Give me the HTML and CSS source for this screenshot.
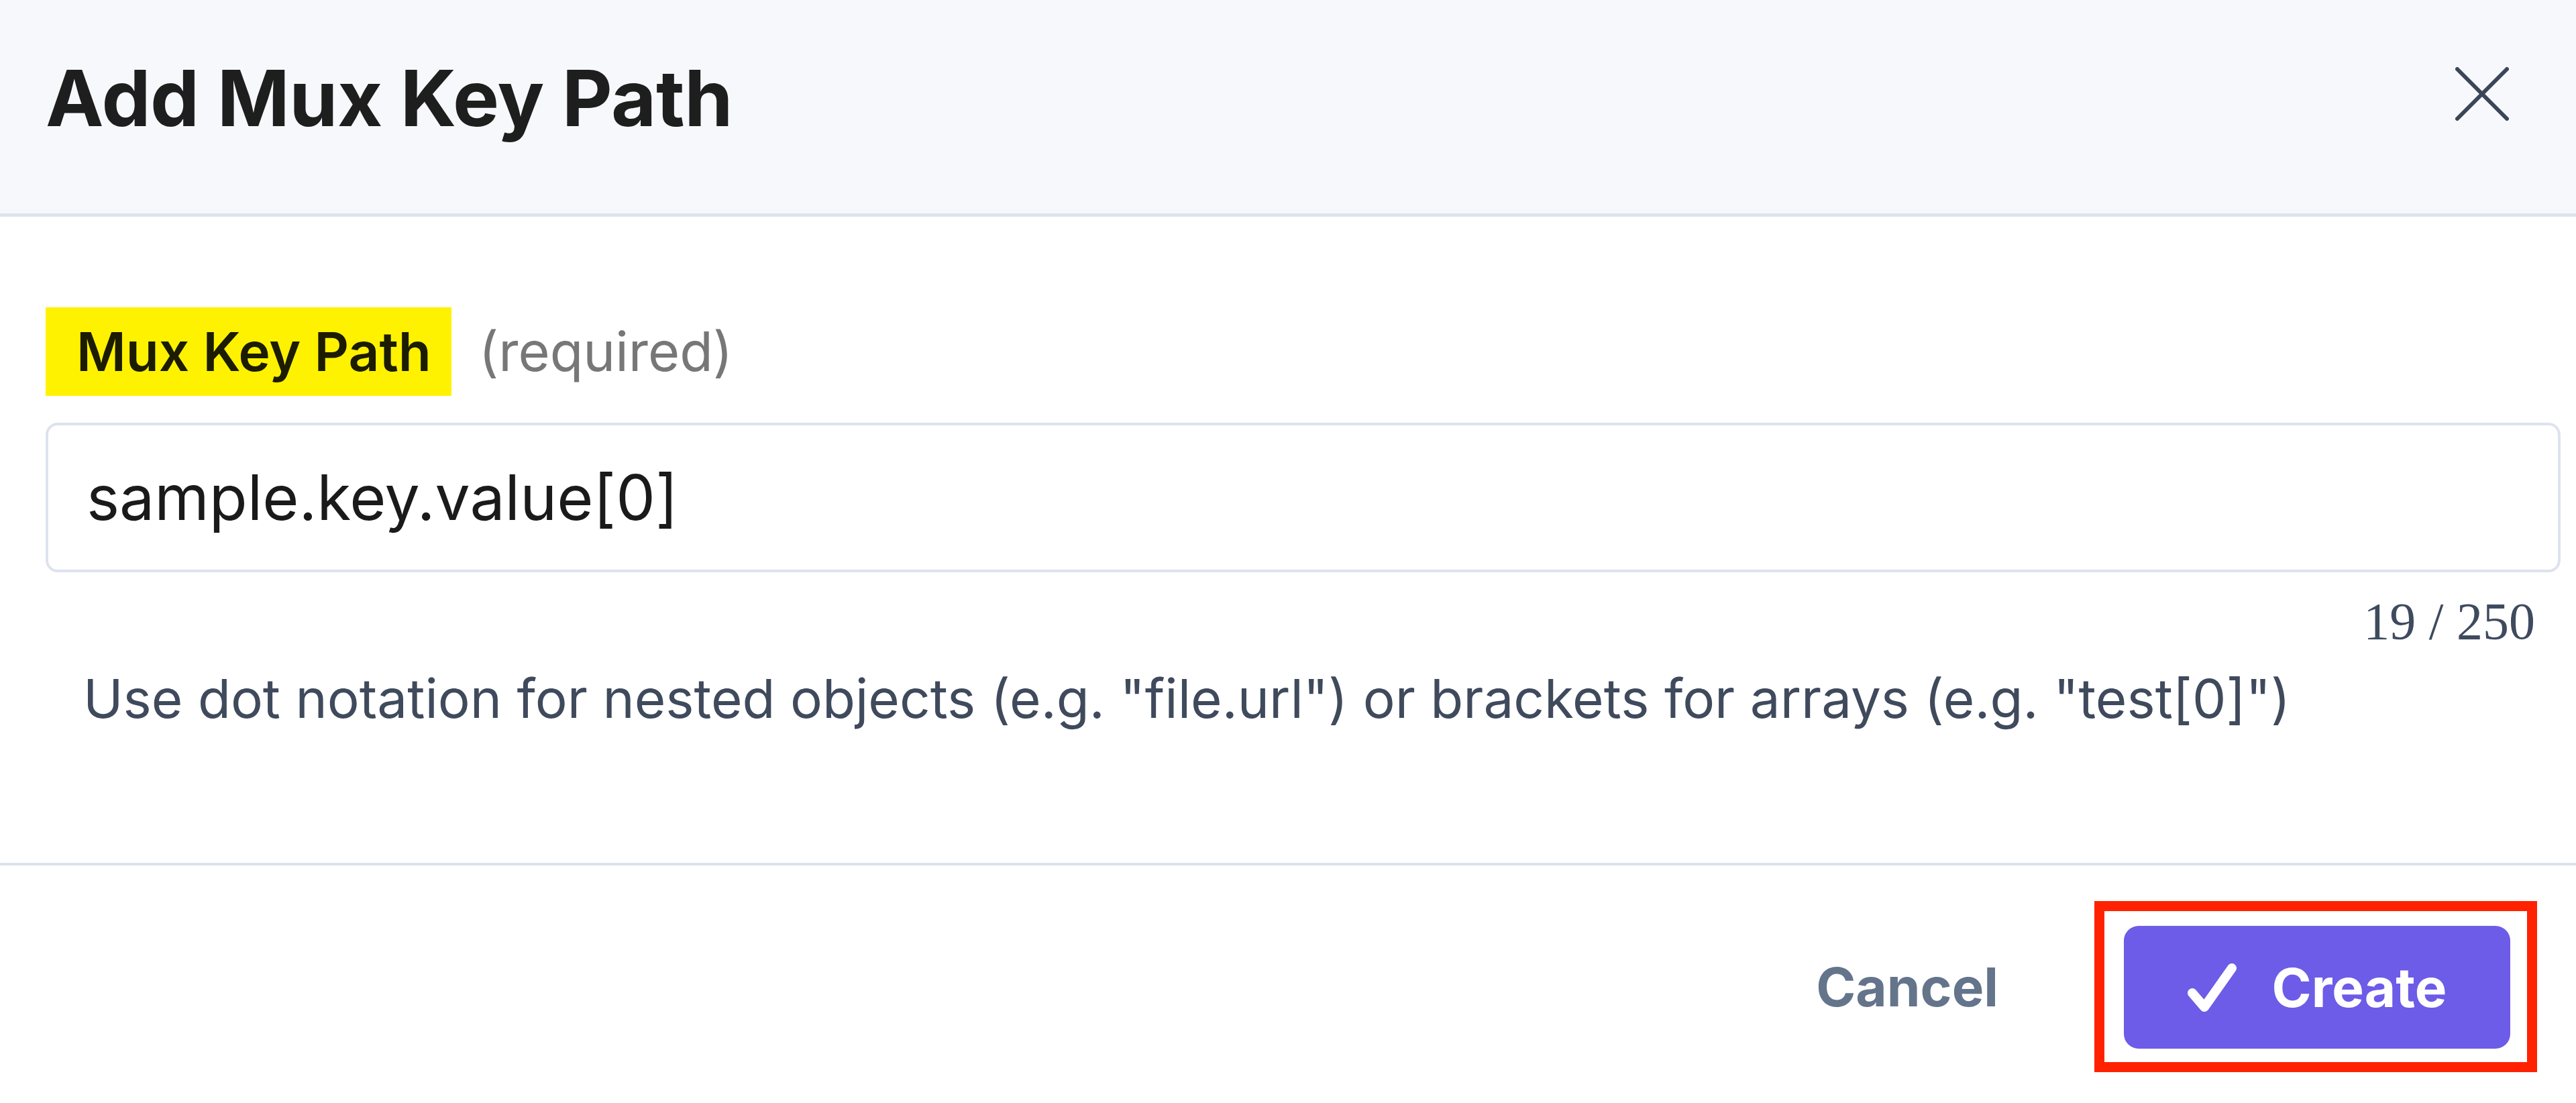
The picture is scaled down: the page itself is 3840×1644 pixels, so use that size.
FILE: index.html
```html
<!DOCTYPE html>
<html lang="en">
<head>
<meta charset="utf-8">
<title>Add Mux Key Path</title>
<link rel="stylesheet" href="styles.css">
</head>
<body>
<div class="dialog">
  <header class="dlg-header">
    <h1 class="dlg-title">Add Mux Key Path</h1>
    <button class="close-btn" aria-label="Close">
      <svg viewBox="0 0 80 80" width="80" height="80"><path d="M3 3 L77 77 M77 3 L3 77" fill="none" stroke="#3b4658" stroke-width="6" stroke-linecap="round"/></svg>
    </button>
  </header>
  <main class="dlg-body">
    <div class="field-label">
      <span class="label-hl">Mux Key Path</span>
      <span class="req">(required)</span>
    </div>
    <div class="text-input">sample.key.value[0]</div>
    <div class="counter">19 / 250</div>
    <p class="help">Use dot notation for nested objects (e.g. "file.url") or brackets for arrays (e.g. "test[0]")</p>
  </main>
  <footer class="dlg-footer">
    <button class="cancel-btn">Cancel</button>
    <span class="annot-box">
      <button class="create-btn">
        <svg class="check" viewBox="0 0 73 73" width="73" height="73"><polyline points="7,45 25,66 66,8" fill="none" stroke="#ffffff" stroke-width="14" stroke-linecap="round" stroke-linejoin="round"/></svg>
        <span>Create</span>
      </button>
    </span>
  </footer>
</div>
</body>
</html>
```

FILE: styles.css
```css
* { box-sizing: border-box; }
html, body { margin: 0; padding: 0; background: #ffffff; }
body { font-family: Inter, "Noto Sans", "Liberation Sans", sans-serif; }

.dialog {
  width: 3840px;
  height: 1644px;
  display: flex;
  flex-direction: column;
  background: #ffffff;
}

.dlg-header {
  height: 323px;
  flex: none;
  background: #f7f8fb;
  border-bottom: 5px solid #dde3ee;
  display: flex;
  align-items: center;
  justify-content: space-between;
  padding: 0 100px 27px 68px;
}
.dlg-title {
  margin: 0;
  font-size: 116px;
  line-height: 1;
  font-weight: 700;
  color: #1e1e1e;
  letter-spacing: -0.5px;
}
.close-btn {
  border: 0;
  background: transparent;
  padding: 0;
  width: 80px;
  height: 80px;
  margin-bottom: 11px;
  display: block;
}
.close-btn svg { display: block; }

.dlg-body {
  flex: 1;
  padding: 135px 23px 0 68px;
}
.field-label {
  display: flex;
  align-items: center;
  gap: 41px;
}
.label-hl {
  background: #fff200;
  height: 132px;
  line-height: 132px;
  padding: 0 30px 0 46px;
  font-size: 80px;
  font-weight: 600;
  color: #1c1c00;
}
.req {
  font-size: 81px;
  line-height: 132px;
  color: #777777;
}
.text-input {
  margin-top: 40px;
  height: 223px;
  border: 4px solid #dde3ee;
  border-radius: 18px;
  display: flex;
  align-items: center;
  padding-left: 57px;
  font-size: 93px;
  line-height: 1;
  color: #1a1a1a;
}
.counter {
  margin-top: 34px;
  text-align: right;
  padding-right: 38px;
  font-family: "Liberation Serif", "Times New Roman", serif;
  font-size: 78px;
  line-height: 1;
  color: #3e4a5e;
}
.help {
  margin: 36px 0 0;
  padding-left: 56px;
  font-size: 80px;
  line-height: 1;
  color: #3f4a5c;
}

.dlg-footer {
  height: 358px;
  flex: none;
  border-top: 4px solid #dde3ee;
  display: flex;
  align-items: center;
  justify-content: flex-end;
  padding: 7px 58px 0 0;
}
.cancel-btn {
  border: 0;
  background: transparent;
  padding: 0;
  margin-right: 143px;
  font-family: inherit;
  font-size: 80px;
  font-weight: 700;
  line-height: 1;
  color: #64748b;
}
.annot-box {
  display: block;
  border: 15px solid #ff2200;
  padding: 22px 25px 20px 29px;
}
.create-btn {
  display: flex;
  align-items: center;
  justify-content: center;
  gap: 53px;
  width: 576px;
  height: 183px;
  border: 0;
  border-radius: 22px;
  background: #6c5ce7;
  color: #ffffff;
  font-family: inherit;
  font-size: 80px;
  font-weight: 700;
  line-height: 1;
  padding: 0;
}
.create-btn .check { display: block; }
```
